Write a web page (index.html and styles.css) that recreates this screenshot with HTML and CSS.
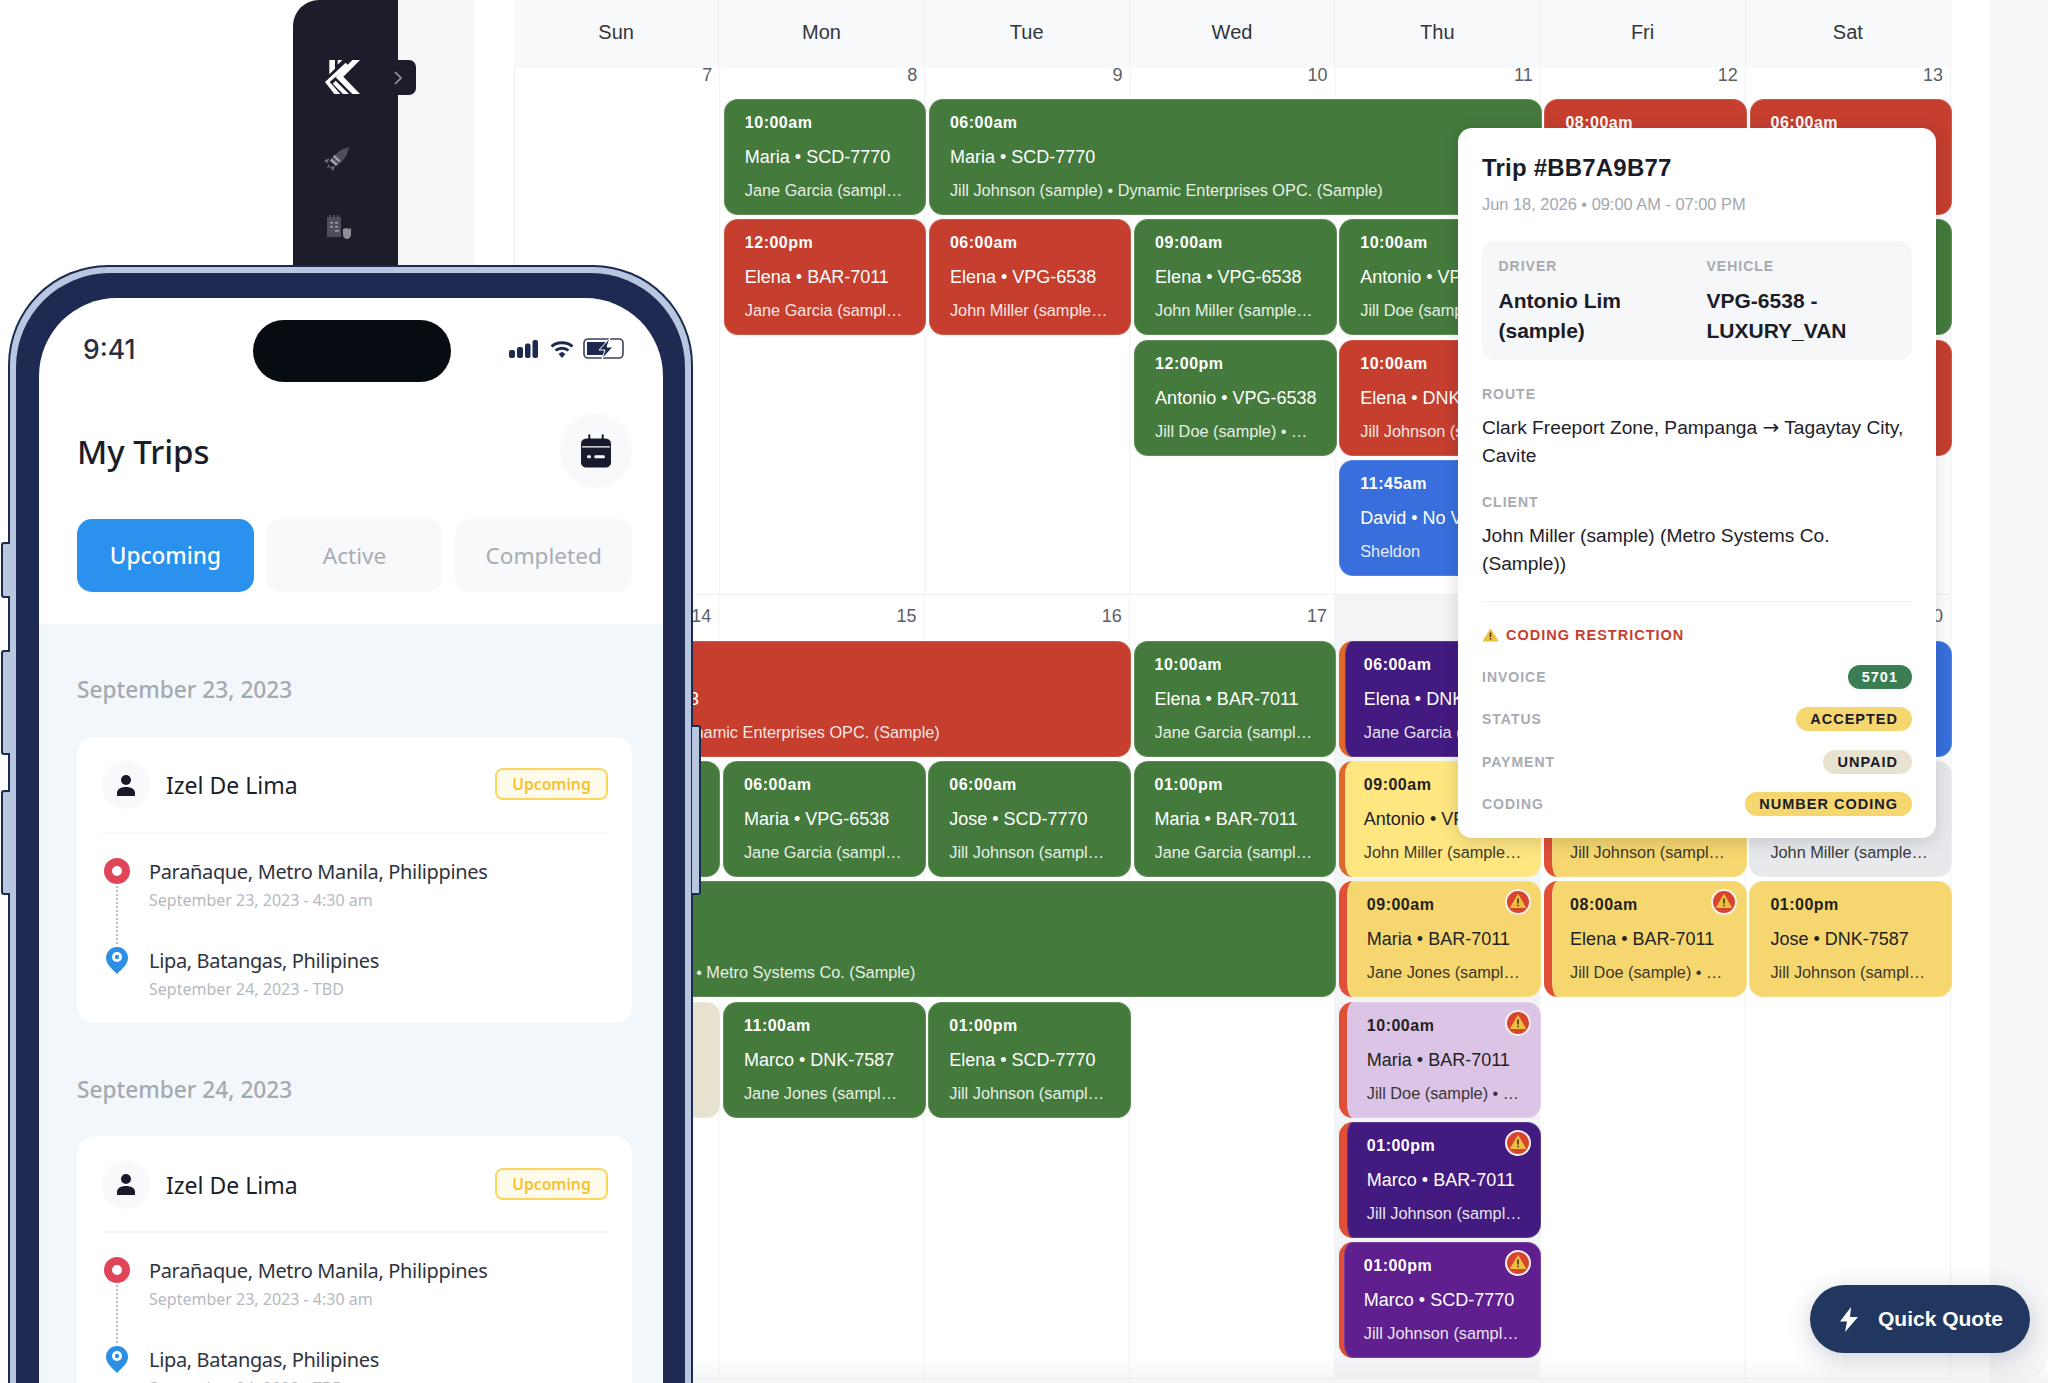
FILE: index.html
```html
<!DOCTYPE html>
<html lang="en">
<head>
<meta charset="utf-8">
<title>Trips</title>
<link rel="stylesheet" href="styles.css">
</head>
<body>
<div class="app">
  <aside class="sidebar">
    <button class="toggle"><svg width="10" height="16" viewBox="0 0 10 16"><path d="M2 2l6 6-6 6" fill="none" stroke="#9a9ba3" stroke-width="1.6"/></svg></button>
    <svg class="logo" width="35" height="34" viewBox="0 0 105 102"><g fill="#fff"><polygon points="13,0 30,0 30,26 13,43"/><polygon points="38,0 52,0 38,14"/><polygon points="82,0 105,0 55,50 105,102 82,102 32,52"/><polygon points="62,8 71,17 14,66 46,102 28,102 0,66"/><polygon points="32,62 72,102 54,102 23,71"/></g></svg>
    <svg class="side-icon rocket" width="26" height="24" viewBox="0 0 26 24"><path d="M25 0C17 2 10 7 6 14l6 5c7-4 12-11 13-19z" fill="#4c4e5c"/><path d="M7.500 11.500l6 5.500-1.500 2-6-5.500zM10.500 8l6 5.500-1.500 1.800-6-5.500z" fill="#a3a4ab"/><path d="M5 11L0 14l4 2zM11 19l-2 5-3-4zM5 17l-2 4 3-1z" fill="#6a6b74"/></svg>
    <svg class="side-icon doc" width="24" height="24" viewBox="0 0 24 24"><path d="M0 2h2V0h2v2h2V0h2v2h2V0h2v2h2v20H0z" fill="#4c4e5c"/><path d="M3 7h3v1.500H3zM8 7h3v1.500H8zM3 11h3v1.500H3zM8 11h3v1.500H8zM8 15h4v1.500H8z" fill="#a3a4ab"/><path d="M16 14l3-1 3 1 2-1v7c0 2-2 4-4 4s-4-2-4-4z" fill="#8e8f97"/></svg>
  </aside>
  <div class="rail"></div>
  <main class="calendar">
    <div class="cal-head">
      <div>Sun</div><div>Mon</div><div>Tue</div><div>Wed</div><div>Thu</div><div>Fri</div><div>Sat</div>
    </div>
    <section class="week week-one">
      <div class="num c1">7</div><div class="num c2">8</div><div class="num c3">9</div><div class="num c4">10</div><div class="num c5">11</div><div class="num c6">12</div><div class="num c7">13</div>

      <article class="ev green c2 r1"><b>10:00am</b><p>Maria • SCD-7770</p><small>Jane Garcia (sample) • Dynamic</small></article>
      <article class="ev green c3 r1 s3"><b>06:00am</b><p>Maria • SCD-7770</p><small>Jill Johnson (sample) • Dynamic Enterprises OPC. (Sample)</small></article>
      <article class="ev red c6 r1"><b>08:00am</b><p>Elena • BAR-7011</p><small>Jill Doe (sample) • Metro</small></article>
      <article class="ev red c7 r1"><b>06:00am</b><p>Jose • VPG-6538</p><small>Jane Jones (sample) • Metro</small></article>

      <article class="ev red c2 r2"><b>12:00pm</b><p>Elena • BAR-7011</p><small>Jane Garcia (sample) • Dynamic</small></article>
      <article class="ev red c3 r2"><b>06:00am</b><p>Elena • VPG-6538</p><small>John Miller (sample) • Metro</small></article>
      <article class="ev green c4 r2"><b>09:00am</b><p>Elena • VPG-6538</p><small>John Miller (sample) • Metro</small></article>
      <article class="ev green c5 r2"><b>10:00am</b><p>Antonio • VPG-6538</p><small>Jill Doe (sample) • Metro</small></article>
      <article class="ev green c7 r2"><b>09:00am</b><p>Maria • SCD-7770</p><small>Jill Doe (sample) • Metro</small></article>

      <article class="ev green c4 r3"><b>12:00pm</b><p>Antonio • VPG-6538</p><small>Jill Doe (sample) • Metro Systems</small></article>
      <article class="ev red c5 r3"><b>10:00am</b><p>Elena • DNK-7587</p><small>Jill Johnson (sample) • Metro</small></article>
      <article class="ev red c7 r3"><b>12:00pm</b><p>Marco • BAR-7011</p><small>Jill Doe (sample) • Metro</small></article>

      <article class="ev blue c5 r4"><b>11:45am</b><p>David • No Vehicle</p><small>Sheldon</small></article>
    </section>
    <section class="week week-two">
      <div class="today"></div>
      <div class="num c1">14</div><div class="num c2">15</div><div class="num c3">16</div><div class="num c4">17</div><div class="num c5">18</div><div class="num c6">19</div><div class="num c7">20</div>

      <article class="ev red c1 r1 s3"><b>06:00am</b><p>Antonio • BAR-7013</p><small>Jill Doe (sample) • Dynamic Enterprises OPC. (Sample)</small></article>
      <article class="ev green c4 r1"><b>10:00am</b><p>Elena • BAR-7011</p><small>Jane Garcia (sample) • Dynamic</small></article>
      <article class="ev indigo accent-orange c5 r1"><b>06:00am</b><p>Elena • DNK-7587</p><small>Jane Garcia (sample) • Dynamic</small></article>
      <article class="ev blue c7 r1"><b>08:00am</b><p>David • No Vehicle</p><small>Sheldon</small></article>

      <article class="ev green c1 r2"><b>06:00am</b><p>Jose • DNK-7587</p><small>Jane Garcia (sample) • Dynamic</small></article>
      <article class="ev green c2 r2"><b>06:00am</b><p>Maria • VPG-6538</p><small>Jane Garcia (sample) • Dynamic</small></article>
      <article class="ev green c3 r2"><b>06:00am</b><p>Jose • SCD-7770</p><small>Jill Johnson (sample) • Metro</small></article>
      <article class="ev green c4 r2"><b>01:00pm</b><p>Maria • BAR-7011</p><small>Jane Garcia (sample) • Dynamic</small></article>
      <article class="ev lemon accent-orange c5 r2"><b>09:00am</b><p>Antonio • VPG-6538</p><small>John Miller (sample) • Metro</small></article>
      <article class="ev amber accent-red c6 r2"><b>09:00am</b><p>Marco • BAR-7011</p><small>Jill Johnson (sample) • Metro</small></article>
      <article class="ev grey c7 r2"><b>10:00am</b><p>Jose • VPG-6538</p><small>John Miller (sample) • Metro</small></article>

      <article class="ev green c1 r3 s4"><b>06:00am</b><p>Marco • DNK-7584</p><small>Jill Johnson (sample) • Metro Systems Co. (Sample)</small></article>
      <article class="ev amber accent-red c5 r3"><b>09:00am</b><p>Maria • BAR-7011</p><small>Jane Jones (sample) • Metro</small><svg class="warn" viewBox="0 0 26 26"><use href="#warn-badge"/></svg></article>
      <article class="ev amber accent-red c6 r3"><b>08:00am</b><p>Elena • BAR-7011</p><small>Jill Doe (sample) • Metro Systems</small><svg class="warn" viewBox="0 0 26 26"><use href="#warn-badge"/></svg></article>
      <article class="ev amber c7 r3"><b>01:00pm</b><p>Jose • DNK-7587</p><small>Jill Johnson (sample) • Metro</small></article>

      <article class="ev beige c1 r4"><b>08:00am</b><p>Jose • DNK-7587</p><small>Jane Jones (sample) • Metro Systems</small></article>
      <article class="ev green c2 r4"><b>11:00am</b><p>Marco • DNK-7587</p><small>Jane Jones (sample) • Metro</small></article>
      <article class="ev green c3 r4"><b>01:00pm</b><p>Elena • SCD-7770</p><small>Jill Johnson (sample) • Metro</small></article>
      <article class="ev lilac accent-red c5 r4"><b>10:00am</b><p>Maria • BAR-7011</p><small>Jill Doe (sample) • Metro Systems</small><svg class="warn" viewBox="0 0 26 26"><use href="#warn-badge"/></svg></article>

      <article class="ev indigo accent-red c5 r5"><b>01:00pm</b><p>Marco • BAR-7011</p><small>Jill Johnson (sample) • Metro</small><svg class="warn" viewBox="0 0 26 26"><use href="#warn-badge"/></svg></article>

      <article class="ev violet accent-thin c5 r6"><b>01:00pm</b><p>Marco • SCD-7770</p><small>Jill Johnson (sample) • Metro</small><svg class="warn" viewBox="0 0 26 26"><use href="#warn-badge"/></svg></article>
    </section>
    <div class="week-tail"></div>
  </main>
  <div class="outer-right"></div>
</div>

<svg class="defs" width="0" height="0">
  <symbol id="warn-badge" viewBox="0 0 26 26">
    <circle cx="13" cy="13" r="12" fill="#d9442f" stroke="#f8f2ee" stroke-width="2"/>
    <path d="M13 5.500L20.500 18.500H5.500z" fill="#eebe3f" stroke="#eebe3f" stroke-linejoin="round"/>
    <path d="M13 9.500v5M13 15.800v1.400" stroke="#3a2a12" stroke-width="1.500"/>
  </symbol>
</svg>

<div class="bottom-fade"></div>

<aside class="popover">
  <h2>Trip #BB7A9B77</h2>
  <div class="pop-sub">Jun 18, 2026 • 09:00 AM - 07:00 PM</div>
  <div class="pop-box">
    <div><div class="pop-label">DRIVER</div><div class="pop-strong driver">Antonio Lim (sample)</div></div>
    <div><div class="pop-label">VEHICLE</div><div class="pop-strong">VPG-6538 - LUXURY_VAN</div></div>
  </div>
  <div class="pop-label route">ROUTE</div>
  <div class="pop-text">Clark Freeport Zone, Pampanga <span class="arrow">→</span> Tagaytay City, Cavite</div>
  <div class="pop-label client">CLIENT</div>
  <div class="pop-text">John Miller (sample) (Metro Systems Co. (Sample))</div>
  <hr class="pop-rule">
  <div class="pop-warn"><svg width="17" height="14" viewBox="0 0 17 14"><path d="M8.500 1L16 13H1z" fill="#eebe3f" stroke="#eebe3f" stroke-linejoin="round"/><path d="M8.500 4.500v4.500M8.500 10v1.500" stroke="#4a3510" stroke-width="1.500"/></svg>CODING RESTRICTION</div>
  <div class="pop-rows">
    <div class="pop-row"><span class="pop-label">INVOICE</span><span class="pill pill-green">5701</span></div>
    <div class="pop-row"><span class="pop-label">STATUS</span><span class="pill pill-yellow">ACCEPTED</span></div>
    <div class="pop-row"><span class="pop-label">PAYMENT</span><span class="pill pill-beige">UNPAID</span></div>
    <div class="pop-row"><span class="pop-label">CODING</span><span class="pill pill-yellow">NUMBER CODING</span></div>
  </div>
</aside>

<button class="fab"><svg width="18" height="25" viewBox="0 0 18 25"><path d="M11 0L0 14.500h7L5 25l13-15h-8z" fill="#fff"/></svg>Quick Quote</button>

<div class="phone">
  <span class="hw hw-mute"></span><span class="hw hw-up"></span><span class="hw hw-down"></span><span class="hw hw-power"></span>
  <div class="rim">
    <div class="bezel">
      <div class="screen">
        <div class="status">
          <span class="clock">9:41</span>
          <span class="island"></span>
          <span class="status-icons">
            <svg class="signal" width="29" height="18" viewBox="0 0 29 18"><g fill="#1e2a52"><rect x="0" y="10" width="6" height="8" rx="2"/><rect x="8" y="7" width="6" height="11" rx="2"/><rect x="16" y="3.500" width="5.500" height="14.500" rx="2"/><rect x="23.500" y="0" width="5.500" height="18" rx="2"/></g></svg>
            <svg width="24" height="18" viewBox="0 0 24 18"><g fill="none" stroke="#1e2a52" stroke-width="2.800"><path d="M1.500 6.500C7 1.500 17 1.500 22.500 6.500"/><path d="M5.500 10.500C9 7.500 15 7.500 18.500 10.500"/></g><path d="M8.500 14L12 11.800 15.500 14 12 18z" fill="#1e2a52"/></svg>
            <svg width="41" height="21" viewBox="0 0 41 21"><rect x="1" y="1" width="39" height="19" rx="4" fill="none" stroke="#3a4260" stroke-width="1.600"/><path d="M4 4h18v13H4z" fill="#1e2a52"/><path d="M27 0L16 12h6l-3 9 11-12h-6z" fill="#1e2a52" stroke="#fff" stroke-width="1"/></svg>
          </span>
        </div>
        <div class="title-row">
          <h1>My Trips</h1>
          <span class="round-btn"><svg width="30" height="34" viewBox="0 0 29 32"><path d="M7 0h2v4h11V0h2v4h2a5 5 0 0 1 5 5v18a5 5 0 0 1-5 5H5a5 5 0 0 1-5-5V9a5 5 0 0 1 5-5h2z" fill="#181a2e"/><path d="M1 12h27" stroke="#fff" stroke-width="1.200"/><rect x="6" y="20" width="3.500" height="3" rx="1" fill="#fff"/><rect x="13" y="20" width="10" height="3" rx="1" fill="#fff"/></svg></span>
        </div>
        <div class="tabs">
          <span class="tab tab-on">Upcoming</span>
          <span class="tab">Active</span>
          <span class="tab">Completed</span>
        </div>
        <div class="trips">
          <h3>September 23, 2023</h3>
          <div class="trip-card">
            <div class="trip-head">
              <span class="avatar"><svg width="18" height="21" viewBox="0 0 18 21"><circle cx="9" cy="5" r="5" fill="#181a2b"/><path d="M0 21v-3c0-4 4-6 9-6s9 2 9 6v3z" fill="#181a2b"/></svg></span>
              <span class="trip-name">Izel De Lima</span>
              <span class="badge">Upcoming</span>
            </div>
            <div class="stop">
              <div class="stop-mark"><span class="pin-red"></span><span class="dots"></span></div>
              <div><div class="place">Parañaque, Metro Manila, Philippines</div><div class="when">September 23, 2023 - 4:30 am</div></div>
            </div>
            <div class="stop">
              <div class="stop-mark"><svg width="22" height="27" viewBox="0 0 22 27"><path d="M11 0a11 11 0 0 1 11 11c0 6-6 11-11 16C6 22 0 17 0 11A11 11 0 0 1 11 0z" fill="#2b8fe6"/><circle cx="11" cy="10" r="5" fill="#fff"/><circle cx="11" cy="10" r="2.200" fill="#2b8fe6"/></svg></div>
              <div><div class="place">Lipa, Batangas, Philipines</div><div class="when">September 24, 2023 - TBD</div></div>
            </div>
          </div>
          <h3>September 24, 2023</h3>
          <div class="trip-card">
            <div class="trip-head">
              <span class="avatar"><svg width="18" height="21" viewBox="0 0 18 21"><circle cx="9" cy="5" r="5" fill="#181a2b"/><path d="M0 21v-3c0-4 4-6 9-6s9 2 9 6v3z" fill="#181a2b"/></svg></span>
              <span class="trip-name">Izel De Lima</span>
              <span class="badge">Upcoming</span>
            </div>
            <div class="stop">
              <div class="stop-mark"><span class="pin-red"></span><span class="dots"></span></div>
              <div><div class="place">Parañaque, Metro Manila, Philippines</div><div class="when">September 23, 2023 - 4:30 am</div></div>
            </div>
            <div class="stop">
              <div class="stop-mark"><svg width="22" height="27" viewBox="0 0 22 27"><path d="M11 0a11 11 0 0 1 11 11c0 6-6 11-11 16C6 22 0 17 0 11A11 11 0 0 1 11 0z" fill="#2b8fe6"/><circle cx="11" cy="10" r="5" fill="#fff"/><circle cx="11" cy="10" r="2.200" fill="#2b8fe6"/></svg></div>
              <div><div class="place">Lipa, Batangas, Philipines</div><div class="when">September 24, 2023 - TBD</div></div>
            </div>
          </div>
        </div>
      </div>
    </div>
  </div>
</div>
</body>
</html>
```
FILE: styles.css
```css
* { box-sizing: border-box; }
html, body { margin: 0; padding: 0; }
body {
  position: relative;
  width: 2048px;
  height: 1383px;
  overflow: hidden;
  background: #fff;
  font-family: "Liberation Sans", Arial, sans-serif;
  color: #1a1c28;
}
h1, h2, h3, p { margin: 0; font-weight: inherit; }
.defs { position: absolute; }

/* Desktop app */
.app { display: flex; height: 1383px; overflow: hidden; }
.sidebar {
  position: relative;
  flex: none;
  width: 105px;
  margin-left: 293px;
  padding: 60px 0 0 32px;
  display: flex;
  flex-direction: column;
  background: #1c1c2b;
  border-top-left-radius: 26px;
}
.logo { display: block; }
.side-icon { display: block; }
.rocket { margin: 53px 0 0 -1px; }
.doc { margin: 44px 0 0 2px; }
.toggle {
  position: absolute;
  left: 100px;
  top: 60px;
  width: 23px;
  height: 35px;
  padding: 0;
  border: 0;
  background: #1c1c2b;
  border-radius: 0 7px 7px 0;
  display: flex;
  align-items: center;
}
.rail { flex: none; width: 76px; background: #f6f6f7; }
.calendar { flex: none; width: 1437px; margin-left: 40px; }
.cal-head {
  display: grid;
  grid-template-columns: repeat(7, minmax(0, 1fr));
  height: 68px;
  background: #f8f9fa;
}
.cal-head div {
  display: flex;
  align-items: center;
  justify-content: center;
  padding-bottom: 3px;
  font-size: 20px;
  color: #33353c;
  border-right: 1px solid #f0f1f3;
}
.week {
  display: grid;
  grid-template-columns: repeat(7, minmax(0, 1fr));
  row-gap: 4.4px;
  border-bottom: 1px solid #eef0f2;
  background-image: linear-gradient(to left, #eef0f2 1px, transparent 1px);
  background-size: calc(100% / 7) 100%;
}
.week-one { grid-template-rows: 26.6px repeat(4, 116px) 13px; border-left: 1px solid #eef0f2; }
.week-two { grid-template-rows: 41.6px repeat(6, 116px) 15px; }
.week-tail { height: 6px; }
.today { grid-column: 5; grid-row: 1 / -1; background: #f3f4f6; }
.num {
  grid-row: 1;
  align-self: end;
  padding: 0 8px 10px 0;
  text-align: right;
  font-size: 18px;
  line-height: 20px;
  color: #5b5e66;
}

/* Events */
.ev {
  position: relative;
  min-width: 0;
  margin: 0 -1px 0 3.700px;
  padding: 14px 23px 0 21px;
  border-radius: 14px;
  display: flex;
  flex-direction: column;
  gap: 12px;
  color: #fff;
  box-shadow: inset 0 0 0 1px rgba(255, 255, 255, .14);
}
.ev b {
  font-size: 16px;
  line-height: 20px;
  letter-spacing: .5px;
}
.ev p {
  font-size: 18px;
  line-height: 24px;
  white-space: nowrap;
}
.ev small {
  margin-top: -1px;
  font-size: 16.300px;
  line-height: 20px;
  white-space: nowrap;
  overflow: hidden;
  text-overflow: ellipsis;
  opacity: .88;
}
.c1 { grid-column-start: 1; }
.c2 { grid-column-start: 2; }
.c3 { grid-column-start: 3; }
.c4 { grid-column-start: 4; }
.c5 { grid-column-start: 5; }
.c6 { grid-column-start: 6; }
.c7 { grid-column-start: 7; }
.s3 { grid-column-end: span 3; }
.s4 { grid-column-end: span 4; }
.r1 { grid-row: 2; }
.r2 { grid-row: 3; }
.r3 { grid-row: 4; }
.r4 { grid-row: 5; }
.r5 { grid-row: 6; }
.r6 { grid-row: 7; }
.green { background: #447b3c; }
.red { background: #c53e2e; }
.blue { background: #386fdc; }
.indigo { background: #431a80; }
.violet { background: #5f1f8f; }
.amber { background: #f6d76f; color: #222; }
.lemon { background: #ffe681; color: #222; }
.lilac { background: #dcc4e6; color: #222; }
.beige { background: #e8e1cf; color: #222; }
.grey { background: #e7e9ec; color: #222; }
.accent-red { border-left: 8px solid #e04f36; padding-left: 20px; padding-right: 18px; }
.accent-red.c6 { padding-left: 18px; }
.accent-orange { border-left: 6px solid #e0672a; padding-left: 19px; padding-right: 18px; }
.accent-thin { border-left: 5px solid #e04f36; padding-left: 20px; padding-right: 18px; }
.warn { position: absolute; right: 10px; top: 8px; width: 26px; height: 26px; }

.outer-right {
  flex: none;
  width: 58px;
  margin-left: 39px;
  background: #f5f6f7;
  border-bottom-right-radius: 30px;
}
.bottom-fade {
  position: absolute;
  left: 692px;
  right: 0;
  bottom: 0;
  height: 25px;
  background: linear-gradient(to bottom, rgba(232, 234, 237, 0), rgba(232, 234, 237, .55));
}

/* Popover */
.popover {
  position: absolute;
  left: 1458px;
  top: 128px;
  width: 478px;
  height: 710px;
  padding: 25px 24px 0;
  background: #fff;
  border-radius: 14px;
  box-shadow: 0 4px 18px rgba(20, 24, 40, .16);
}
.popover h2 { font-size: 24px; line-height: 30px; font-weight: 700; letter-spacing: .2px; }
.pop-sub { margin-top: 11px; font-size: 16.400px; line-height: 20px; color: #a3a7ae; }
.pop-box {
  display: grid;
  grid-template-columns: 208px 1fr;
  margin-top: 27px;
  height: 119px;
  padding: 16px 16.500px 0;
  background: #f6f7f9;
  border-radius: 12px;
}
.pop-label { font-size: 14px; line-height: 18px; font-weight: 700; letter-spacing: 1px; color: #a7abb2; }
.pop-strong { margin-top: 11px; font-size: 21px; line-height: 29.500px; font-weight: 700; color: #1a1c28; max-width: 190px; }
.driver { max-width: 150px; }
.route { margin-top: 25px; }
.client { margin-top: 24px; }
.pop-text { margin-top: 11px; font-size: 19.200px; line-height: 27.500px; color: #1f2129; }
.arrow { font-family: "DejaVu Sans", sans-serif; font-size: 20px; line-height: 1; }
.pop-rule { margin: 24px 0 0; border: 0; border-top: 1px solid #eef0f2; }
.pop-warn {
  display: flex;
  align-items: center;
  gap: 7px;
  margin-top: 24px;
  font-size: 14.500px;
  line-height: 18px;
  font-weight: 700;
  letter-spacing: 1px;
  color: #c5402e;
}
.pop-rows { display: flex; flex-direction: column; gap: 18.300px; margin-top: 21px; }
.pop-row { display: flex; align-items: center; justify-content: space-between; height: 24px; }
.pill {
  height: 24px;
  padding: 0 14px;
  border-radius: 12px;
  font-size: 14.500px;
  line-height: 24px;
  font-weight: 700;
  letter-spacing: 1px;
  color: #1a1c28;
}
.pill-green { background: #3a7d52; color: #fff; }
.pill-yellow { background: #f5d66f; }
.pill-beige { background: #e8e2d0; }

/* Quick quote */
.fab {
  position: absolute;
  left: 1810px;
  top: 1285px;
  width: 220px;
  height: 68px;
  padding: 0 0 0 30px;
  display: flex;
  align-items: center;
  gap: 20px;
  border: 0;
  border-radius: 34px;
  background: #22375f;
  color: #fff;
  font-family: "Liberation Sans", Arial, sans-serif;
  font-size: 21px;
  font-weight: 700;
  box-shadow: 0 6px 24px rgba(30, 40, 70, .22);
}

/* Phone */
.phone {
  position: absolute;
  left: 8px;
  top: 265px;
  width: 685px;
  height: 1118px;
  font-family: "Noto Sans", "Open Sans", sans-serif;
}
.hw {
  position: absolute;
  width: 9px;
  background: #b9c6e0;
  border: 2px solid #1c2a50;
}
.hw-mute { left: -7px; top: 277px; height: 56px; border-right: 0; border-radius: 3px 0 0 3px; }
.hw-up { left: -7px; top: 385px; height: 105px; border-right: 0; border-radius: 3px 0 0 3px; }
.hw-down { left: -7px; top: 525px; height: 105px; border-right: 0; border-radius: 3px 0 0 3px; }
.hw-power { right: -8px; top: 460px; height: 170px; border-left: 0; border-radius: 0 3px 3px 0; }
.rim {
  height: 100%;
  padding: 6px 6px 0 6px;
  background: #b9c6e0;
  border: 2px solid #1c2a50;
  border-bottom: 0;
  border-radius: 100px 100px 0 0;
}
.bezel {
  height: 100%;
  padding: 25px 22px 0 23px;
  background: #1e2a52;
  border-radius: 94px 94px 0 0;
}
.screen {
  height: 100%;
  background: #fff;
  border-radius: 78px 78px 0 0;
  overflow: hidden;
}
.status {
  display: flex;
  align-items: flex-start;
  padding: 22px 39px 0 45px;
}
.clock {
  width: 54px;
  margin: 14px 0 0 -1px;
  font-family: Inter, "Liberation Sans", sans-serif;
  font-size: 26.500px;
  line-height: 30px;
  font-weight: 500;
  color: #2a2e3e;
}
.island {
  flex: none;
  width: 198px;
  height: 62px;
  margin-left: 116px;
  border-radius: 31px;
  background: #060c12;
}
.status-icons {
  display: flex;
  align-items: center;
  gap: 9px;
  margin: 18px 0 0 auto;
}
.status-icons svg { display: block; }
.status-icons .signal { margin-right: 3px; }
.title-row {
  display: flex;
  align-items: center;
  justify-content: space-between;
  margin-top: 32px;
  padding: 0 31px 0 38px;
}
.title-row h1 { padding-top: 2px; font-size: 33px; line-height: 44px; font-weight: 500; color: #1b1d2a; }
.round-btn {
  width: 72px;
  height: 74px;
  display: flex;
  align-items: center;
  justify-content: center;
  border-radius: 50%;
  background: #f7f9fa;
}
.tabs {
  display: flex;
  gap: 12.500px;
  margin-top: 31px;
  padding: 0 31px 32px 38px;
}
.tab {
  flex: 1;
  height: 73px;
  display: flex;
  align-items: center;
  justify-content: center;
  border-radius: 15px;
  background: #f7f9fb;
  color: #a8adb5;
  font-size: 22.600px;
}
.tab-on { background: #2b91ee; color: #fff; font-weight: 500; }
.trips { height: 900px; padding: 51px 31px 0 38px; background: #f1f7fb; }
.trips h3 { margin-bottom: 31.500px; font-size: 22.700px; line-height: 30px; font-weight: 500; color: #a5a9b0; }
.trip-card {
  height: 286px;
  margin-bottom: 52px;
  padding: 25px 24px 0 25px;
  background: #fff;
  border-radius: 18px;
}
.trip-head {
  display: flex;
  align-items: center;
  gap: 16px;
  height: 72px;
  padding-bottom: 23px;
  margin-bottom: 24px;
  border-bottom: 2px solid #f6f7f8;
}
.avatar {
  flex: none;
  width: 48px;
  height: 48px;
  display: flex;
  align-items: center;
  justify-content: center;
  border-radius: 50%;
  background: #f8f9fa;
}
.trip-name { font-size: 23px; line-height: 34px; color: #1b1d2a; }
.badge {
  width: 113px;
  height: 32px;
  margin: -2px 0 0 auto;
  border: 2px solid #fbd55e;
  border-radius: 8px;
  background: #fffbea;
  color: #f6c234;
  font-size: 15.700px;
  line-height: 29px;
  font-weight: 600;
  text-align: center;
}
.stop { display: flex; gap: 19px; height: 89px; padding-left: 2px; }
.stop-mark {
  flex: none;
  width: 26px;
  display: flex;
  flex-direction: column;
  align-items: center;
}
.pin-red {
  flex: none;
  width: 26px;
  height: 26px;
  border: 8px solid #e0455a;
  border-radius: 50%;
  background: #fff;
}
.dots { flex: 1; margin: 2px 0 3px; border-left: 2px dotted #b9bcc2; }
.place { font-size: 20px; line-height: 28px; letter-spacing: -.35px; color: #2f3340; }
.when { margin-top: 3px; font-size: 16px; line-height: 22px; color: #b5b9bf; }
```
